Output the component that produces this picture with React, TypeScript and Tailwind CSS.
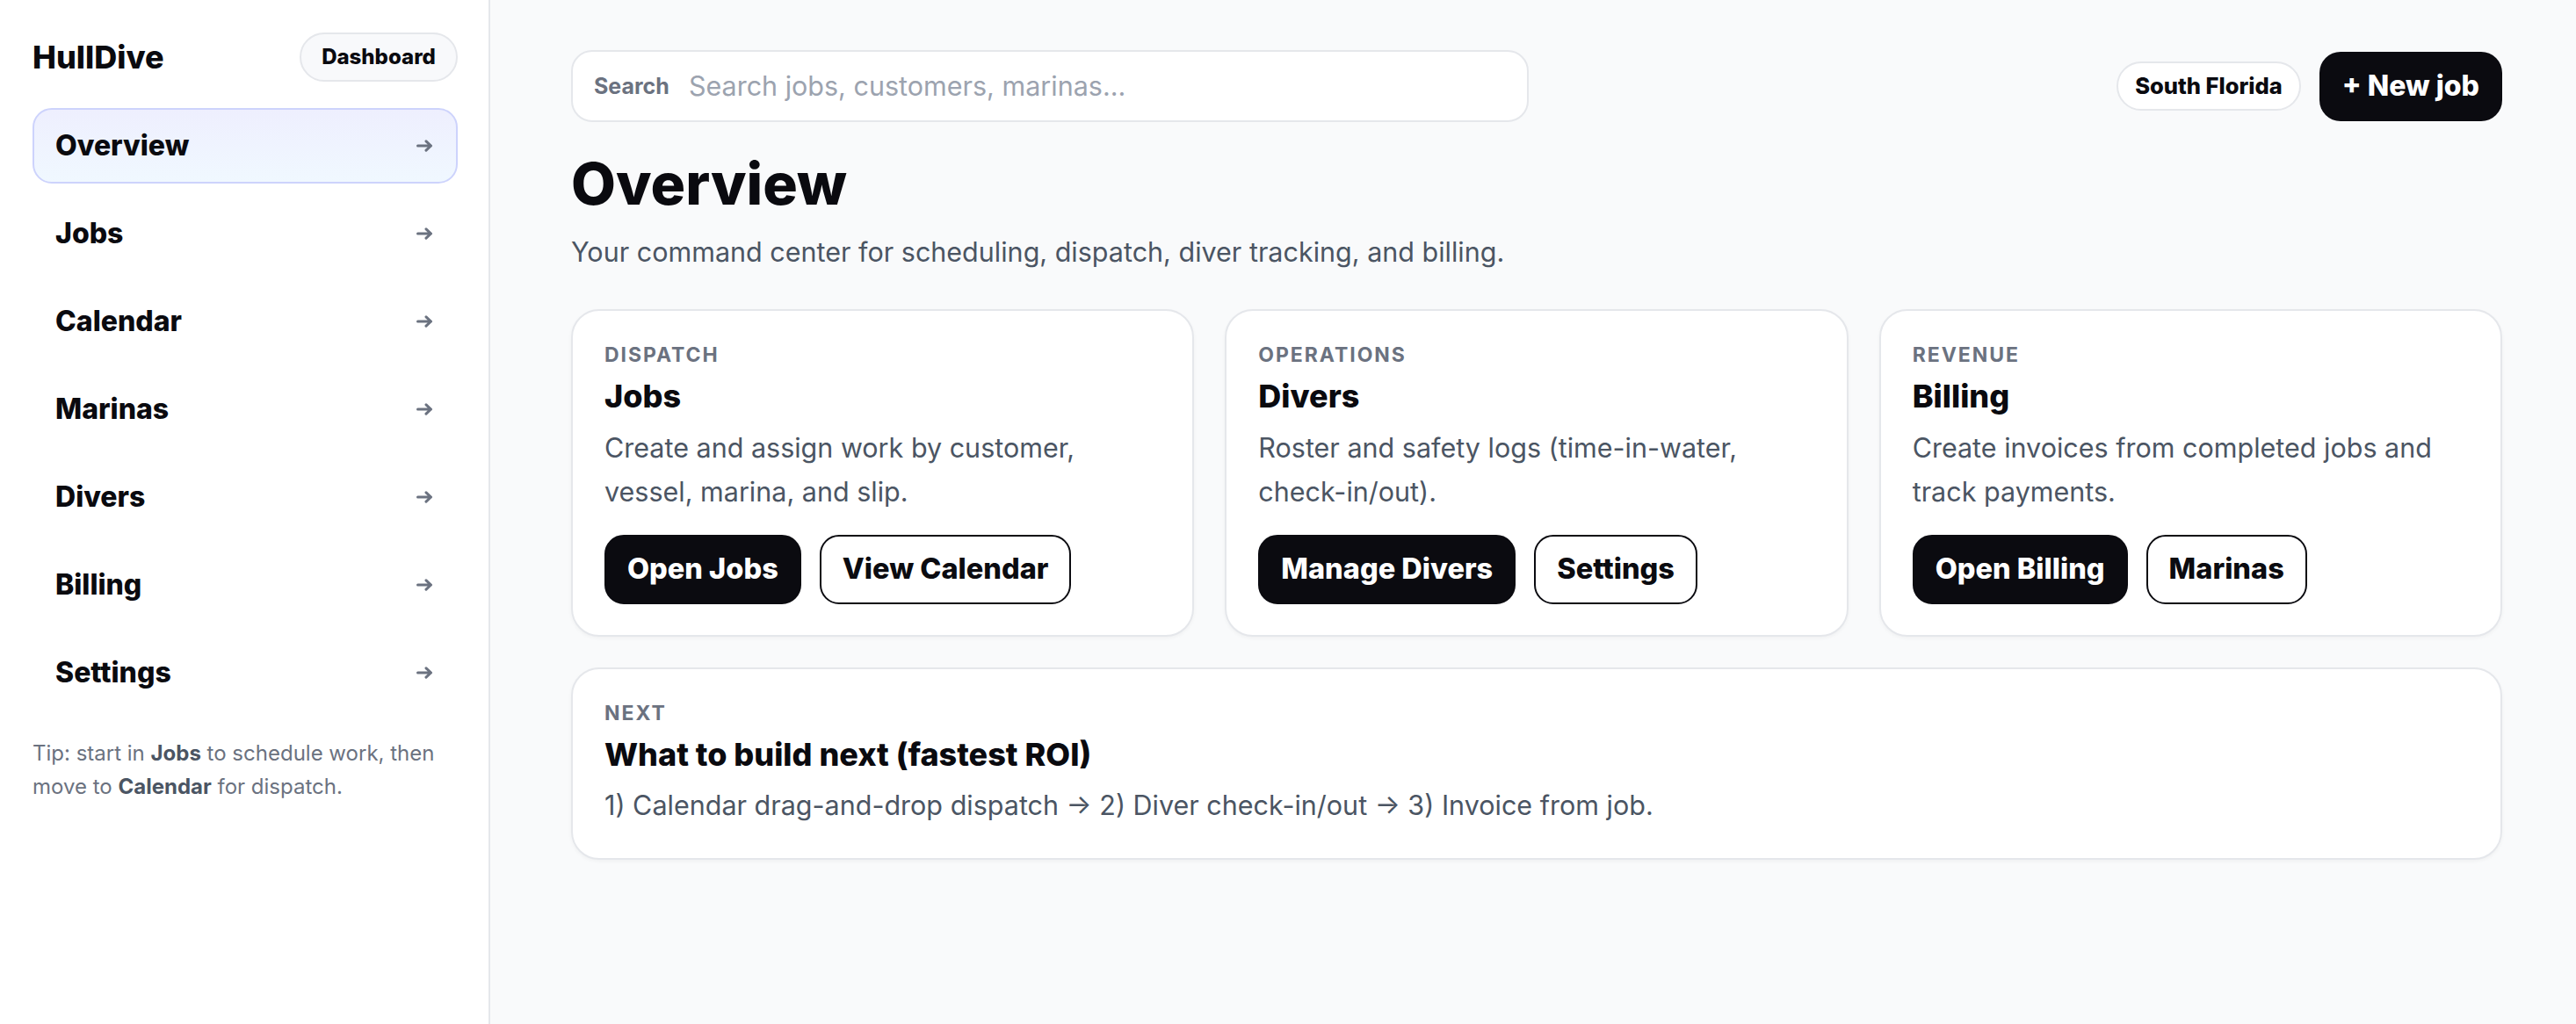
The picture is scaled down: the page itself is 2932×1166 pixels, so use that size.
import React from "react";

const Arrow = () => (
  <svg width="19" height="14" viewBox="0 0 19 14" fill="none" stroke="#6b7280" strokeWidth="3" strokeLinecap="round" strokeLinejoin="round">
    <path d="M1.5 7H16.5M11 1.8L16.5 7L11 12.2" />
  </svg>
);

const navItems = ["Overview", "Jobs", "Calendar", "Marinas", "Divers", "Billing", "Settings"];

type CardProps = { label: string; title: string; desc: string; primary: string; secondary: string };

function Card({ label, title, desc, primary, secondary }: CardProps) {
  return (
    <div className="rounded-[32px] border-2 border-[#e5e7eb] bg-white px-[36px] pb-[35px] pt-[39px] shadow-[0_2px_4px_rgba(0,0,0,0.04)]">
      <div className="text-[23px] font-bold uppercase leading-none tracking-[0.085em] text-[#6b7280]">{label}</div>
      <div className="mt-[17px] text-[36px] font-extrabold leading-none">{title}</div>
      <p className="mt-[16px] max-w-[615px] text-[30.5px] leading-[50px] text-[#4b5563]">{desc}</p>
      <div className="mt-[24px] flex gap-[21px]">
        <button className="h-[79px] rounded-[22px] border-2 border-[#0b0b10] bg-[#0b0b10] px-[24px] text-[32.5px] font-extrabold leading-none text-white">
          {primary}
        </button>
        <button className="h-[79px] rounded-[22px] border-2 border-[#0b0b10] bg-white px-[24px] text-[32.5px] font-extrabold leading-none text-[#0b0b10]">
          {secondary}
        </button>
      </div>
    </div>
  );
}

export default function App() {
  return (
    <div className="flex h-[1166px] w-full bg-[#f9fafb] font-['Inter',sans-serif] text-[#0a0a0f]">
      <aside className="w-[558px] shrink-0 border-r-2 border-[#e5e7eb] bg-white pl-[37px] pr-[35px] pt-[37px]">
        <div className="flex h-[56px] items-center justify-between">
          <div className="text-[36px] font-extrabold leading-none">HullDive</div>
          <div className="flex h-[56px] w-[180px] items-center justify-center rounded-full border-2 border-[#e5e7eb] bg-[#f8f9fb] text-[24px] font-extrabold leading-none">
            Dashboard
          </div>
        </div>
        <nav className="mt-[30px] flex flex-col gap-[14px]">
          {navItems.map((n, i) => (
            <div
              key={n}
              className={
                i === 0
                  ? "flex h-[86px] items-center justify-between rounded-[22px] border-2 border-[#cdd3fc] bg-linear-to-b from-[#eeeffe] to-[#f0f8ff] pl-[24px] pr-[26px]"
                  : "flex h-[86px] items-center justify-between rounded-[22px] border-2 border-transparent pl-[24px] pr-[26px]"
              }
            >
              <span className="text-[32px] font-extrabold leading-none">{n}</span>
              <Arrow />
            </div>
          ))}
        </nav>
        <p className="mt-[30px] text-[24px] leading-[38px] text-[#6b7280]">
          Tip: start in <b className="font-bold text-[#4b5563]">Jobs</b> to schedule work, then move to{" "}
          <b className="font-bold text-[#4b5563]">Calendar</b> for dispatch.
        </p>
      </aside>

      <main className="flex-1 pl-[92px] pr-[84px] pt-[57px]">
        <div className="flex items-center justify-between">
          <div className="flex h-[82px] w-[1090px] items-center rounded-[24px] border-2 border-[#e5e7eb] bg-white pl-[24px]">
            <span className="text-[25px] font-bold leading-none text-[#6b7280]">Search</span>
            <span className="ml-[22px] text-[30.5px] leading-none text-[#9ca3af]">Search jobs, customers, marinas...</span>
          </div>
          <div className="flex items-center gap-[21px]">
            <div className="flex h-[56px] items-center rounded-full border-2 border-[#e5e7eb] bg-white px-[19px] text-[25.5px] font-extrabold leading-none">
              South Florida
            </div>
            <div className="flex h-[79px] items-center rounded-[24px] bg-[#0b0b10] px-[26px] text-[32px] font-extrabold leading-none text-white">
              + New job
            </div>
          </div>
        </div>

        <h1 className="mt-[37px] text-[66px] font-extrabold leading-none">Overview</h1>
        <p className="mt-[30px] text-[30.5px] leading-none text-[#4b5563]">
          Your command center for scheduling, dispatch, diver tracking, and billing.
        </p>

        <div className="mt-[49px] grid grid-cols-3 gap-[35px]">
          <Card
            label="Dispatch"
            title="Jobs"
            desc="Create and assign work by customer, vessel, marina, and slip."
            primary="Open Jobs"
            secondary="View Calendar"
          />
          <Card
            label="Operations"
            title="Divers"
            desc="Roster and safety logs (time-in-water, check-in/out)."
            primary="Manage Divers"
            secondary="Settings"
          />
          <Card
            label="Revenue"
            title="Billing"
            desc="Create invoices from completed jobs and track payments."
            primary="Open Billing"
            secondary="Marinas"
          />
        </div>

        <div className="mt-[35px] rounded-[32px] border-2 border-[#e5e7eb] bg-white px-[36px] pb-[35px] pt-[39px] shadow-[0_2px_4px_rgba(0,0,0,0.04)]">
          <div className="text-[23px] font-bold uppercase leading-none tracking-[0.085em] text-[#6b7280]">Next</div>
          <div className="mt-[17px] text-[36px] font-extrabold leading-none">What to build next (fastest ROI)</div>
          <p className="mt-[15px] text-[30.5px] leading-[50px] text-[#4b5563]">
            1) Calendar drag-and-drop dispatch → 2) Diver check-in/out → 3) Invoice from job.
          </p>
        </div>
      </main>
    </div>
  );
}
